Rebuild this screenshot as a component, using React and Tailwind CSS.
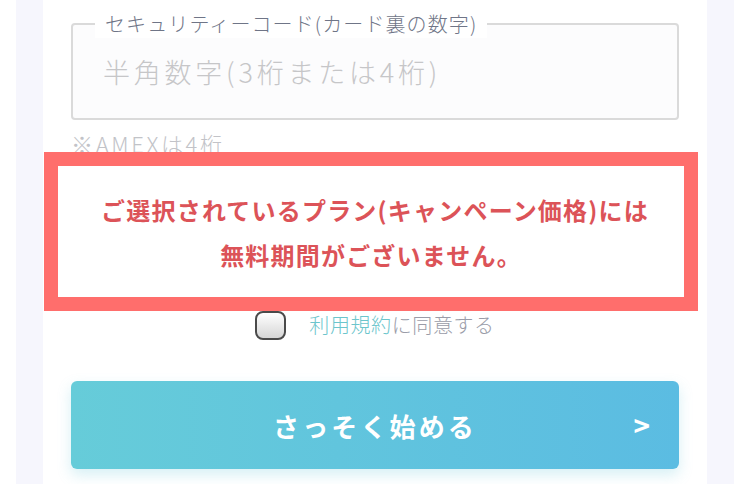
import React from "react";

const jp = { fontFamily: '"Noto Sans CJK JP", "Noto Sans", sans-serif' };

function SecurityCode() {
  return (
    <div>
      <fieldset className="h-[110px] rounded-[4px] border-2 border-[#dadada] bg-[#fcfcfd]">
        <legend className="ml-[22px] bg-white px-[10px] text-[20px] font-light leading-[28px] tracking-[0.055em] text-[#6f7587]">
          セキュリティーコード(カード裏の数字)
        </legend>
        <input
          type="text"
          placeholder="半角数字(3桁または4桁)"
          className="mt-[15px] w-full bg-transparent pl-[30px] text-[27px] font-light leading-[38px] tracking-[0.14em] outline-none placeholder:text-[#c6c6c8]"
        />
      </fieldset>
      <p className="mt-[9px] text-[22px] font-light leading-[28px] tracking-[0.12em] text-[#c2c3c8]">
        ※AMEXは4桁
      </p>
    </div>
  );
}

function Notice() {
  return (
    <div className="relative -mx-[27px] -mt-[5px] flex h-[159px] w-[654px] flex-col items-center justify-center border-[14px] border-[#ff6e6c] bg-white text-[24px] font-bold leading-[45px] tracking-[0.05em] text-[#dc5358]">
      <span className="pl-[8px]">ご選択されているプラン(キャンペーン価格)には</span>
      <span>無料期間がございません。</span>
    </div>
  );
}

function Agree() {
  return (
    <label className="-mt-[1px] flex h-[30px] items-center justify-center gap-[23px]">
      <span className="h-[29px] w-[31px] rounded-[8px] border-2 border-[#4a4a4a] bg-gradient-to-b from-white to-[#d6d6d6]" />
      <span className="text-[20px] font-light leading-[28px] tracking-[0.03em] text-[#9a9ca8]">
        <span className="text-[#6cc5cc]">利用規約</span>に同意する
      </span>
    </label>
  );
}

export default function App() {
  return (
    <div className="h-[484px] w-[750px] overflow-hidden bg-white px-[16px]" style={jp}>
      <div className="h-full bg-[#f6f6fd] px-[27px]">
        <div className="h-full bg-white px-[28px] pt-[10px]">
          <SecurityCode />
          <Notice />
          <Agree />
          <button className="mt-[41px] grid h-[88px] w-full grid-cols-[1fr_auto_1fr] items-center rounded-[6px] bg-gradient-to-r from-[#66ccd9] to-[#5bbce2] text-white shadow-[0_6px_14px_rgba(94,196,214,0.25)]">
            <span />
            <span className="text-[26px] font-bold tracking-[0.12em]">さっそく始める</span>
            <span className="justify-self-end pr-[29px] text-[28px] font-bold leading-none">&gt;</span>
          </button>
        </div>
      </div>
    </div>
  );
}
